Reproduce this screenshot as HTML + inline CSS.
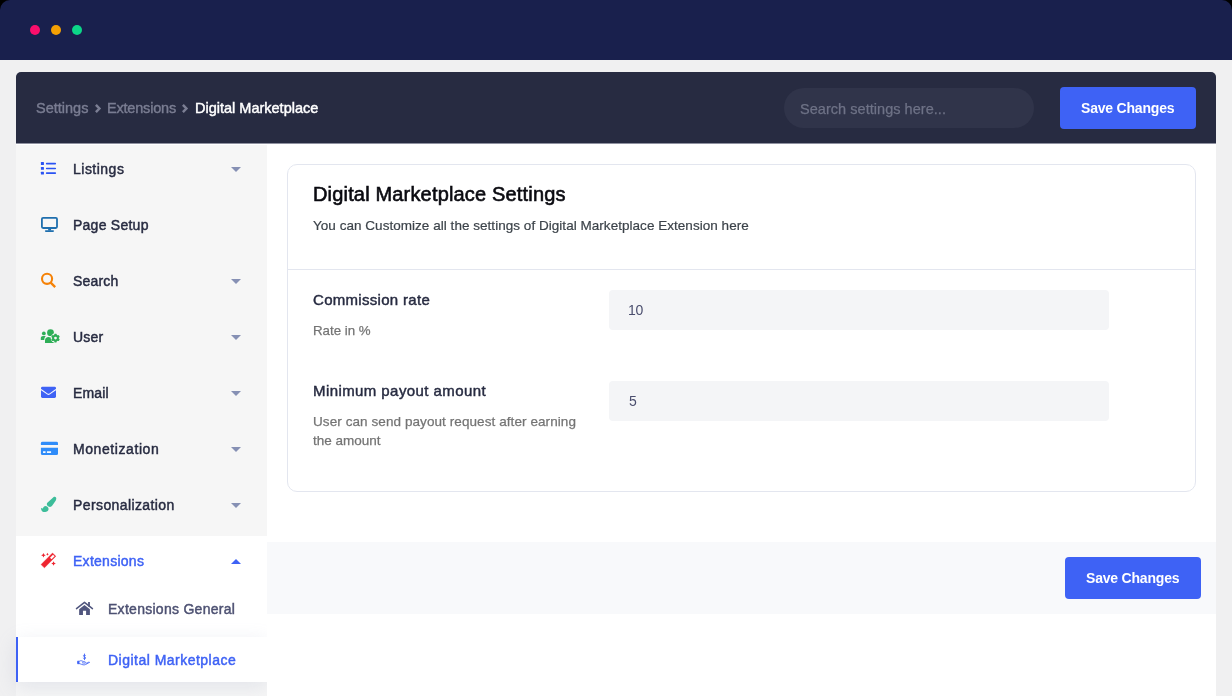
<!DOCTYPE html>
<html lang="en">
<head>
<meta charset="utf-8">
<title>Digital Marketplace Settings</title>
<style>
*{box-sizing:border-box;margin:0;padding:0}
html,body{width:1232px;height:696px;overflow:hidden;background:#000}
body{font-family:"Liberation Sans",sans-serif;color:#272b41;position:relative}
.abs{position:absolute}
.t{position:absolute;white-space:nowrap;line-height:1;will-change:transform}
.md{-webkit-text-stroke:0.45px currentColor}
#frame{left:0;top:0;width:1232px;height:696px;overflow:hidden}
#pagebg{left:0;top:60px;width:1232px;height:636px;background:#f0f0f1}
#topbar{left:0;top:0;width:1232px;height:60px;background:#19204d;border-radius:10px 10px 0 0}
.dot{position:absolute;top:25px;width:10px;height:10px;border-radius:50%}
#hdr{left:16px;top:72px;width:1200px;height:71px;background:#272b41;border-radius:5px 5px 0 0;box-shadow:0 1px 0 #8f91a0}
#side{left:16px;top:145px;width:250.8px;height:551px;background:#f6f6f6}
#main{left:16px;top:144px;width:1200px;height:552px;background:#fff}
#card{left:287px;top:164px;width:909px;height:328px;border:1px solid #e3e6ef;border-radius:10px;background:#fff}
#divider{left:288px;top:269px;width:907px;height:1px;background:#e3e6ef}
.inp{position:absolute;left:609px;width:500px;height:40px;background:#f4f5f7;border-radius:4px}
#foot{left:267px;top:542px;width:949px;height:72px;background:#f8f9fb}
.btn{position:absolute;width:136px;height:42px;background:#3e62f5;border-radius:4px}
#search{left:784px;top:88px;width:250px;height:40px;border-radius:20px;background:#30344a}
#sideclip{left:0;top:0;width:266.8px;height:696px;overflow:hidden}
#extblock{left:16px;top:536px;width:250.8px;height:101px;background:#fff}
#active{left:16px;top:637px;width:250.8px;height:45px;background:#fff;border-left:2px solid #3e62f5;box-shadow:0 5px 20px rgba(146,153,184,.2)}
.caret{position:absolute;left:231px;width:0;height:0;border-left:5px solid transparent;border-right:5px solid transparent;border-top:5px solid #8690b4}
.caret.up{border-top:none;border-bottom:5px solid #3e62f5}
svg{position:absolute;overflow:visible}
</style>
</head>
<body>
<div id="frame" class="abs">
  <div id="pagebg" class="abs"></div>
  <div id="topbar" class="abs">
    <div class="dot" style="left:30px;background:#fa0e6c"></div>
    <div class="dot" style="left:51px;background:#f4a004"></div>
    <div class="dot" style="left:72px;background:#0cd688"></div>
  </div>

  <div id="hdr" class="abs"></div>
  <div id="main" class="abs"></div>
  <div id="side" class="abs"></div>

  <!-- header contents -->
  <div class="t" id="bc1" style="left:35.6px;top:101px;font-size:14.5px;color:#7a7d92;-webkit-text-stroke:0.4px #7a7d92">Settings</div>
  <div class="t" id="bc2" style="left:106.6px;top:101px;font-size:14.5px;color:#7a7d92;-webkit-text-stroke:0.4px #7a7d92;letter-spacing:-0.2px">Extensions</div>
  <div class="t md" id="bc3" style="left:195.3px;top:101px;font-size:14.5px;color:#fff">Digital Marketplace</div>
  <svg style="left:95px;top:104px" width="6.2" height="9" viewBox="0 0 6.2 9"><path d="M0.9 0.9 L4.4 4.5 L0.9 8.1" fill="none" stroke="#7b7e93" stroke-width="2.5" stroke-linejoin="miter"/></svg>
  <svg style="left:182.3px;top:104px" width="6.2" height="9" viewBox="0 0 6.2 9"><path d="M0.9 0.9 L4.4 4.5 L0.9 8.1" fill="none" stroke="#7b7e93" stroke-width="2.5" stroke-linejoin="miter"/></svg>

  <div id="search" class="abs"></div>
  <div class="t" id="ph" style="left:800px;top:102px;font-size:14.5px;color:#6e7286;-webkit-text-stroke:0.25px #6e7286;letter-spacing:0.04px">Search settings here...</div>
  <div class="btn" style="left:1060px;top:87px"></div>
  <div class="t" id="sv1" style="left:1081px;top:101px;font-size:14px;color:#fff;font-weight:bold;letter-spacing:-0.2px">Save Changes</div>

  <!-- sidebar -->
  <div id="sideclip" class="abs"><div id="extblock" class="abs"></div><div id="active" class="abs"></div></div>

  <div class="t md" id="s1" style="left:72.8px;top:162px;font-size:14px;letter-spacing:0.49px">Listings</div>
  <div class="t md" id="s2" style="left:72.8px;top:218px;font-size:14px;letter-spacing:0.25px">Page Setup</div>
  <div class="t md" id="s3" style="left:72.8px;top:274px;font-size:14px;letter-spacing:0.18px">Search</div>
  <div class="t md" id="s4" style="left:72.8px;top:330px;font-size:14px;letter-spacing:0.2px">User</div>
  <div class="t md" id="s5" style="left:72.8px;top:386px;font-size:14px;letter-spacing:0.15px">Email</div>
  <div class="t md" id="s6" style="left:72.8px;top:442px;font-size:14px;letter-spacing:0.58px">Monetization</div>
  <div class="t md" id="s7" style="left:72.8px;top:498px;font-size:14px;letter-spacing:0.4px">Personalization</div>
  <div class="t md" id="s8" style="left:72.8px;top:554px;font-size:14px;color:#3e62f5;letter-spacing:0.27px">Extensions</div>
  <div class="t md" id="s9" style="left:108px;top:602px;font-size:14px;color:#4d5172;letter-spacing:0.28px">Extensions General</div>
  <div class="t md" id="s10" style="left:108px;top:653px;font-size:14px;color:#3e62f5;letter-spacing:0.48px">Digital Marketplace</div>

<svg class="abs" id="icons" style="left:0;top:0" width="1232" height="696" viewBox="0 0 1232 696">
  <g fill="#2a53f3"><rect x="40.9" y="162.0" width="3.05" height="3.00" rx="0.5"/><rect x="45.85" y="162.85" width="10.2" height="1.70" rx="0.8"/><rect x="40.9" y="166.9" width="3.05" height="2.90" rx="0.5"/><rect x="45.85" y="167.65" width="10.2" height="1.65" rx="0.8"/><rect x="40.9" y="171.7" width="3.05" height="2.90" rx="0.5"/><rect x="45.85" y="172.3" width="10.2" height="1.65" rx="0.8"/></g>
  <g fill="none" stroke="#1f6fae"><rect x="41.9" y="217.8" width="15.1" height="10.2" rx="1.2" stroke-width="1.8"/></g><g fill="#1f6fae"><path d="M48.3 228.6 H50.9 L51.2 230.5 H48 Z"/><rect x="44.9" y="230.3" width="9.1" height="1.6" rx="0.8"/></g>
  <g fill="none" stroke="#f58207" stroke-width="2.1"><circle cx="47.05" cy="278.85" r="5.05"/><path d="M50.7 282.6 L55.2 287.1" stroke-width="2.3" stroke-linecap="butt"/></g>
  <g fill="#2eae57"><circle cx="43.85" cy="333.45" r="1.9"/><circle cx="50.5" cy="332.65" r="3.4"/><path d="M40.8 339.9 V338.2 C40.8 336.9 41.8 336.0 43.0 336.0 H44.6 C45.1 336.0 45.5 336.1 45.8 336.3 C44.9 337.0 44.3 338.1 44.2 339.9 Z"/><path d="M45.0 342.9 V340.4 C45.0 338.4 46.5 337.0 48.4 337.0 C49.1 337.3 49.8 337.5 50.5 337.5 C51.2 337.5 51.9 337.3 52.6 337.0 C53.3 337.0 53.8 337.2 54.2 337.4 V342.9 Z"/></g><circle cx="55.5" cy="338.1" r="4.85" fill="#f6f6f6"/><g fill="#2eae57"><circle cx="55.5" cy="338.1" r="3.35"/><rect x="54.35" y="333.80" width="2.3" height="4.30" rx="0.4" transform="rotate(0.0 55.5 338.1)"/><rect x="54.35" y="333.80" width="2.3" height="4.30" rx="0.4" transform="rotate(60.0 55.5 338.1)"/><rect x="54.35" y="333.80" width="2.3" height="4.30" rx="0.4" transform="rotate(120.0 55.5 338.1)"/><rect x="54.35" y="333.80" width="2.3" height="4.30" rx="0.4" transform="rotate(180.0 55.5 338.1)"/><rect x="54.35" y="333.80" width="2.3" height="4.30" rx="0.4" transform="rotate(240.0 55.5 338.1)"/><rect x="54.35" y="333.80" width="2.3" height="4.30" rx="0.4" transform="rotate(300.0 55.5 338.1)"/></g><circle cx="55.5" cy="338.1" r="1.4" fill="#f6f6f6"/>
  <rect x="41.0" y="386.75" width="15.0" height="11.15" rx="1.4" fill="#3e62f5"/><path d="M41.0 389.45 L47.6 394.1 Q48.5 394.7 49.4 394.1 L56.0 389.45" fill="none" stroke="#f4f6fe" stroke-width="1.1"/>
  <path d="M40.9 444.95 V443.3 Q40.9 441.85 42.4 441.85 H56.5 Q58.0 441.85 58.0 443.3 V444.95 Z" fill="#2f8cf9"/><path d="M40.9 447.85 H58.0 V453.5 Q58.0 455.0 56.5 455.0 H42.4 Q40.9 455.0 40.9 453.5 Z" fill="#2f8cf9"/><rect x="43.0" y="451.2" width="2.6" height="1.7" rx="0.3" fill="#f8fbff"/><rect x="46.9" y="451.2" width="4.2" height="1.7" rx="0.3" fill="#f8fbff"/>
  <g fill="#3dbd9a"><path d="M53.4 497.3 C54.3 496.6 55.6 496.7 56.0 497.6 C56.5 498.6 56.3 499.5 55.8 500.4 L52.3 505.6 C51.4 506.9 49.9 507.3 48.5 506.5 C47.0 505.6 46.4 504.2 47.1 502.9 Z"/><path d="M41.0 507.8 C41.6 508.6 42.4 508.6 43.0 507.9 C43.6 507.0 44.4 506.2 45.5 506.1 C46.6 506.1 47.6 506.9 48.2 507.8 C48.9 508.9 48.6 510.2 47.7 510.9 C46.7 511.7 45.6 511.9 44.6 511.9 C43.2 511.9 42.2 511.4 41.6 510.4 C41.1 509.6 40.9 508.6 41.0 507.8 Z"/></g>
  <g fill="#ee2530"><path d="M52.5 553.1 L55.8 556.25 L44.45 567.8 L41.1 564.6 Z" stroke="#ee2530" stroke-width="0.5" stroke-linejoin="round"/><polygon points="43.45,552.95 44.18,554.52 45.75,555.25 44.18,555.98 43.45,557.55 42.72,555.98 41.15,555.25 42.72,554.52"/><polygon points="47.45,552.85 47.90,553.80 48.85,554.25 47.90,554.70 47.45,555.65 47.00,554.70 46.05,554.25 47.00,553.80"/><polygon points="53.55,561.20 54.28,562.77 55.85,563.50 54.28,564.23 53.55,565.80 52.82,564.23 51.25,563.50 52.82,562.77"/></g><path d="M53.0 554.7 L54.6 556.25 L51.55 559.2 L50.0 557.65 Z" fill="#fff"/>
  <g fill="#50567e"><path d="M84.47 604.9 L89.9 609.35 V614.9 H86.1 V610.8 H82.95 V614.9 H79.15 V609.35 Z"/><rect x="88.1" y="602.0" width="1.8" height="4.6"/></g><path d="M76.5 608.6 L84.47 602.3 L92.45 608.6" fill="none" stroke="#50567e" stroke-width="1.5" stroke-linecap="round" stroke-linejoin="round"/>
  <g fill="none" stroke="#3e62f5" stroke-width="0.85" stroke-linecap="round" stroke-linejoin="round"><path d="M84.5 654.0 V659.7"/><path d="M85.6 655.5 C85.4 654.8 83.5 654.7 83.4 655.8 C83.3 656.9 85.7 656.7 85.7 658.0 C85.7 659.0 83.6 659.0 83.3 658.2"/><path d="M77.9 661.2 H79.0 V663.7 H77.9 Z" fill="#3e62f5"/><path d="M79.0 661.5 C80.0 660.7 81.0 660.4 82.0 661.0 C83.0 661.6 84.5 661.5 85.5 662.1 C86.2 662.6 85.6 663.3 84.8 663.2 L82.4 662.8"/><path d="M79.0 663.5 C81.0 663.9 82.5 665.0 84.2 664.9 C85.8 664.8 88.0 663.0 89.6 662.4 C89.0 661.9 88.0 662.2 86.6 663.2"/></g>
</svg>
  <div class="caret" style="top:167px"></div>
  <div class="caret" style="top:279px"></div>
  <div class="caret" style="top:335px"></div>
  <div class="caret" style="top:391px"></div>
  <div class="caret" style="top:447px"></div>
  <div class="caret" style="top:503px"></div>
  <div class="caret up" style="top:559px"></div>

  <!-- main -->
  <div id="card" class="abs"></div>
  <div id="divider" class="abs"></div>
  <div class="t md" id="h1" style="-webkit-text-stroke:0.6px currentColor;left:313.2px;top:184px;font-size:20px;color:#0a0a10;letter-spacing:0.17px">Digital Marketplace Settings</div>
  <div class="t" id="sub" style="left:313px;top:219px;font-size:13.5px;color:#3c434a;-webkit-text-stroke:0.2px #3c434a;letter-spacing:0.035px">You can Customize all the settings of Digital Marketplace Extension here</div>

  <div class="t md" id="l1" style="-webkit-text-stroke:0.45px currentColor;left:313.4px;top:292px;font-size:15px;letter-spacing:0.3px">Commission rate</div>
  <div class="t" id="d1" style="-webkit-text-stroke:0.25px #747474;left:313.4px;top:324px;font-size:13.3px;color:#747474">Rate in %</div>
  <div class="inp" style="top:290px"></div>
  <div class="t" id="v1" style="left:628.4px;top:303px;font-size:14px;color:#4a4e6e;letter-spacing:-0.2px">10</div>

  <div class="t md" id="l2" style="-webkit-text-stroke:0.45px currentColor;left:313.4px;top:383px;font-size:15px;letter-spacing:0.42px">Minimum payout amount</div>
  <div class="t" id="d2a" style="-webkit-text-stroke:0.25px #747474;left:313.4px;top:415px;font-size:13.5px;color:#747474;letter-spacing:0.08px">User can send payout request after earning</div>
  <div class="t" id="d2b" style="-webkit-text-stroke:0.25px #747474;left:313.4px;top:434px;font-size:13.5px;color:#747474">the amount</div>
  <div class="inp" style="top:381px"></div>
  <div class="t" id="v2" style="left:629px;top:394px;font-size:14px;color:#4a4e6e">5</div>

  <div id="foot" class="abs"></div>
  <div class="btn" style="left:1065px;top:557px"></div>
  <div class="t" id="sv2" style="left:1086px;top:571px;font-size:14px;color:#fff;font-weight:bold;letter-spacing:-0.2px">Save Changes</div>
</div>
</body>
</html>
